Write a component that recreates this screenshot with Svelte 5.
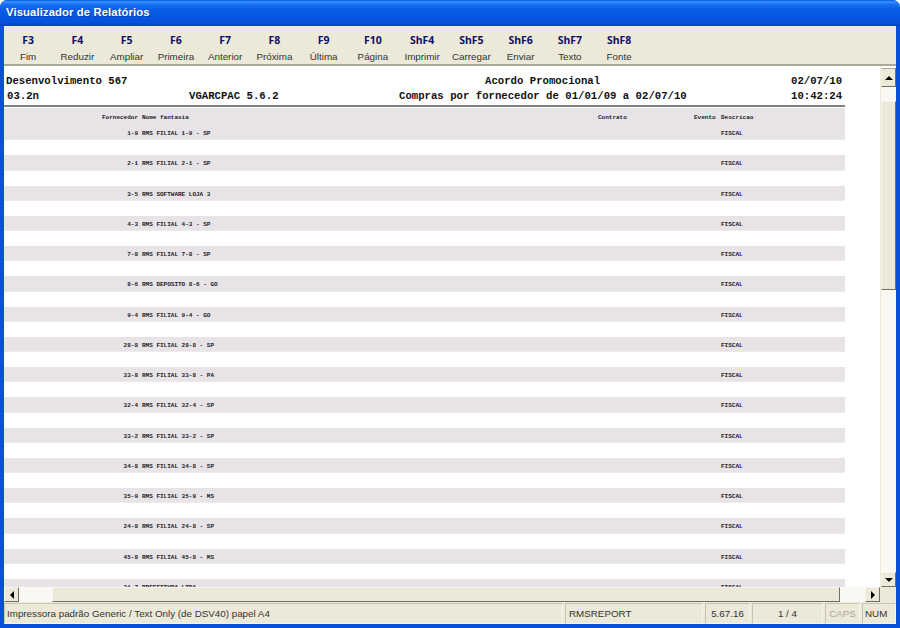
<script>
  const keys = [
    ['F3','Fim'],['F4','Reduzir'],['F5','Ampliar'],['F6','Primeira'],['F7','Anterior'],['F8','Próxima'],['F9','Última'],
    ['F10','Página'],['ShF4','Imprimir'],['ShF5','Carregar'],['ShF6','Enviar'],['ShF7','Texto'],['ShF8','Fonte']
  ];
  const rows = [
    ['1-9','RMS FILIAL 1-9 - SP'],['2-1','RMS FILIAL 2-1 - SP'],['3-5','RMS SOFTWARE LOJA 3'],['4-3','RMS FILIAL 4-3 - SP'],
    ['7-8','RMS FILIAL 7-8 - SP'],['8-6','RMS DEPOSITO 8-6 - GO'],['9-4','RMS FILIAL 9-4 - GO'],['28-8','RMS FILIAL 28-8 - SP'],
    ['33-8','RMS FILIAL 33-8 - PA'],['32-4','RMS FILIAL 32-4 - SP'],['33-2','RMS FILIAL 33-2 - SP'],['34-8','RMS FILIAL 34-8 - SP'],
    ['35-9','RMS FILIAL 35-9 - MS'],['24-8','RMS FILIAL 24-8 - SP'],['45-8','RMS FILIAL 45-8 - MS'],['31-7','PREFEITURA LTDA']
  ];
</script>

<div class="window">
  <header class="title">Visualizador de Relatórios</header>
  <div class="inner">
    <nav class="toolbar">
      {#each keys as [k, l]}
        <div class="tool"><b>{k}</b><span>{l}</span></div>
      {/each}
    </nav>
    <div class="middle">
      <div class="viewport">
        <div class="page">
          <div class="rep-head">
            <div class="line one"><span>Desenvolvimento 567</span><span>Acordo Promocional</span><span>02/07/10</span></div>
            <div class="line two"><span>03.2n</span><span>VGARCPAC 5.6.2</span><span>Compras por fornecedor de 01/01/09 a 02/07/10</span><span>10:42:24</span></div>
          </div>
          <div class="rule"></div>
          <div class="table">
            {#each rows as [code, name], i}
              <div class="rec">
                {#if i === 0}
                  <div class="cols hd"><span class="code">Fornecedor</span><span>Nome fantasia</span><span>Contrato</span><span>Evento</span><span>Descricao</span></div>
                {/if}
                <div class="cols"><span class="code">{code}</span><span>{name}</span><span></span><span></span><span>FISCAL</span></div>
              </div>
            {/each}
          </div>
        </div>
        <div class="vbar">
          <div class="btn"><i class="tri up"></i></div>
          <div class="dither d1"></div>
          <div class="thumb vthumb"></div>
          <div class="dither grow"></div>
          <div class="btn"><i class="tri down"></i></div>
        </div>
      </div>
      <div class="hrow">
        <div class="hbar">
          <div class="btn"><i class="tri left"></i></div>
          <div class="dither d2"></div>
          <div class="thumb hthumb"></div>
          <div class="dither grow"></div>
          <div class="btn"><i class="tri right"></i></div>
        </div>
      </div>
    </div>
    <footer class="status">
      <div class="p p1">Impressora padrão Generic / Text Only (de DSV40) papel A4</div>
      <div class="p p2">RMSREPORT</div>
      <div class="p p3">5.67.16</div>
      <div class="p p4">1 / 4</div>
      <div class="p p5">CAPS</div>
      <div class="p p6">NUM</div>
    </footer>
  </div>
</div>

<style>
  :global(body) { margin: 0; background: #fff; }
  .window {
    width: 900px; height: 628px; box-sizing: border-box; overflow: hidden;
    display: flex; flex-direction: column;
    background: #0a50d8; border-radius: 7px 7px 0 0;
    padding: 0 4px 4px;
    font-family: "Liberation Sans", Arial, sans-serif;
  }
  .title {
    margin: 0 -4px; height: 26px; flex: none; box-sizing: border-box;
    padding: 0 0 3px 6px; display: flex; align-items: center;
    color: #fff; font: bold 11.3px "Liberation Sans", sans-serif; letter-spacing: 0.1px;
    text-shadow: 1px 1px 0 #0a3fb0;
    background: linear-gradient(180deg, #0058e6 0, #3a93ff 2px, #1a72f5 4px, #0a5fe8 9px, #0655e0 18px, #0650d8 23px, #0040b8 26px);
    border-radius: 7px 7px 0 0;
  }
  .inner { flex: 1; min-height: 0; display: flex; flex-direction: column; background: #ece9d8; }
  .toolbar {
    height: 40px; flex: none; box-sizing: border-box; display: flex;
    border-bottom: 2px solid #aca899;
  }
  .tool {
    width: 49.25px; flex: none; display: flex; flex-direction: column; align-items: center;
    padding-top: 7px; box-sizing: border-box; margin-left: 0;
  }
  .toolbar .tool:first-child { margin-left: -0.5px; }
  .tool b { font: bold 10.5px/14px "Noto Sans", sans-serif; color: #10106a; }
  .tool span { font-size: 9.8px; line-height: 13px; margin-top: 3px; color: #333; white-space: nowrap; }
  .middle { flex: 1; min-height: 0; display: flex; flex-direction: column; }
  .viewport { flex: 1; min-height: 0; display: flex; }
  .page { flex: 1; min-width: 0; background: #fff; overflow: hidden; }
  .rep-head { font: bold 10.67px/15px "Liberation Mono", monospace; color: #111; height: 39px; padding-top: 8px; box-sizing: border-box; }
  .line { display: grid; white-space: pre; }
  .line.one { grid-template-columns: 479px 306px auto; padding-left: 2px; }
  .line.two { grid-template-columns: 182px 210px 392px auto; padding-left: 3px; }
  .rule { width: 841px; height: 2px; background: #808080; }
  .table { width: 841px; margin-top: 1px; font: bold 6px/17px "Liberation Mono", monospace; color: #222; }
  .rec { padding-bottom: 15.25px; background: linear-gradient(#e7e3e7, #e7e3e7) no-repeat top / 100% calc(100% - 15.25px); }
  .cols { display: grid; grid-template-columns: 134px 456px 96px 27px 1fr; height: 15px; }
  .cols > span { white-space: pre; }
  .cols > span:not(.code) { padding-left: 4px; }
  .code { text-align: right; }
  .hd { height: 17px; line-height: 20px; }
  .vbar { width: 15px; flex: none; display: flex; flex-direction: column; margin-left: 1px; padding-top: 2px; box-sizing: border-box; background: #fff; }
  .hrow { height: 16px; flex: none; background: #ece9d8; }
  .hbar { display: flex; height: 15px; width: 876px; }
  .btn {
    width: 15px; height: 15px; flex: none; box-sizing: border-box; background: #ece9d8;
    display: flex; align-items: center; justify-content: center;
    border-top: 1px solid #f6f5ee; border-left: 1px solid #f6f5ee; border-right: 1px solid #716f64; border-bottom: 1px solid #716f64;
  }
  .vbar .btn:first-child { height: 19px; border-top-color: #aca899; }
  .dither {
    flex: none;
    background: repeating-conic-gradient(#f4f2e8 0 25%, #fff 0 50%) 0 0 / 2px 2px;
  }
  .grow { flex: 1; }
  .d1 { height: 14px; }
  .d2 { width: 33px; }
  .thumb {
    flex: none; box-sizing: border-box; background: #ece9d8;
    border-top: 1px solid #f6f5ee; border-left: 1px solid #f6f5ee; border-right: 1px solid #716f64; border-bottom: 1px solid #716f64;
  }
  .vthumb { height: 189px; }
  .hthumb { width: 788px; }
  .tri { width: 0; height: 0; display: block; border: 4px solid transparent; }
  .tri.up { border-top: 0; border-bottom-color: #000; }
  .tri.down { border-bottom: 0; border-top-color: #000; }
  .tri.left { border-left: 0; border-right-color: #000; }
  .tri.right { border-right: 0; border-left-color: #000; }
  .status { height: 21px; flex: none; display: flex; gap: 2px; font-size: 9.8px; color: #333; }
  .p {
    box-sizing: border-box; height: 21px; line-height: 20px; flex: none; padding: 0 2px; white-space: nowrap;
    border-top: 1px solid #c9c5b2; border-left: 1px solid #c9c5b2; border-right: 1px solid #f6f5ee; border-bottom: 1px solid #f6f5ee;
  }
  .p1 { width: 559px; }
  .p2 { width: 138px; padding-left: 3px; }
  .p3 { width: 45px; text-align: center; }
  .p4 { width: 71px; text-align: center; }
  .p5 { width: 35px; text-align: center; color: #aca899; }
  .p6 { width: 34px; }
</style>
